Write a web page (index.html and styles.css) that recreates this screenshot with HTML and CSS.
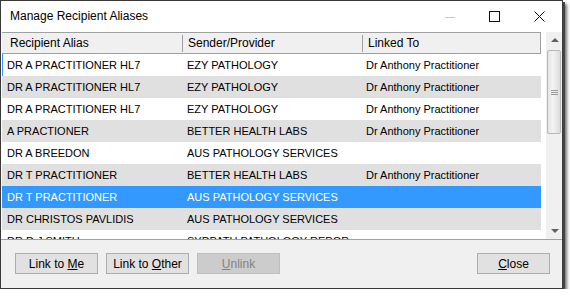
FILE: index.html
```html
<!DOCTYPE html>
<html lang="en">
<head>
	<meta charset="UTF-8">
	<title>Manage Recipient Aliases</title>
	<link rel="stylesheet" href="styles.css">
</head>
<body>
	<div class="win">
		<div class="titlebar">
			<span class="title">Manage Recipient Aliases</span>
			<div class="caption">
				<span class="cap-btn"><svg width="10" height="10" viewBox="0 0 10 10"><path d="M0 5.5h10" stroke="#c8c8c8" stroke-width="1"/></svg></span>
				<span class="cap-btn"><svg width="11" height="11" viewBox="0 0 11 11"><rect x="0.5" y="0.5" width="10" height="10" fill="none" stroke="#111" stroke-width="1"/></svg></span>
				<span class="cap-btn"><svg width="11" height="11" viewBox="0 0 11 11"><path d="M0.5 0.5L10.5 10.5M10.5 0.5L0.5 10.5" stroke="#111" stroke-width="1"/></svg></span>
			</div>
		</div>
		<div class="list">
			<div class="grid">
				<div class="head">
					<div class="hcell">Recipient Alias</div>
					<div class="hcell">Sender/Provider</div>
					<div class="hcell last">Linked To</div>
				</div>
				<div class="rows">
					<div class="row first"><span>DR A PRACTITIONER HL7</span><span>EZY PATHOLOGY</span><span class="linked">Dr Anthony Practitioner</span></div>
					<div class="row alt"><span>DR A PRACTITIONER HL7</span><span>EZY PATHOLOGY</span><span class="linked">Dr Anthony Practitioner</span></div>
					<div class="row"><span>DR A PRACTITIONER HL7</span><span>EZY PATHOLOGY</span><span class="linked">Dr Anthony Practitioner</span></div>
					<div class="row alt"><span>A PRACTIONER</span><span>BETTER HEALTH LABS</span><span class="linked">Dr Anthony Practitioner</span></div>
					<div class="row"><span>DR A BREEDON</span><span>AUS PATHOLOGY SERVICES</span><span class="linked"></span></div>
					<div class="row alt"><span>DR T PRACTITIONER</span><span>BETTER HEALTH LABS</span><span class="linked">Dr Anthony Practitioner</span></div>
					<div class="row sel"><span>DR T PRACTITIONER</span><span>AUS PATHOLOGY SERVICES</span><span class="linked"></span></div>
					<div class="row alt"><span>DR CHRISTOS PAVLIDIS</span><span>AUS PATHOLOGY SERVICES</span><span class="linked"></span></div>
					<div class="row"><span>DR D J SMITH</span><span>SYDPATH PATHOLOGY REPOR</span><span class="linked"></span></div>
				</div>
			</div>
			<div class="scroll">
				<div class="arrow up"></div>
				<div class="track"><div class="thumb"><span class="grip"></span></div></div>
				<div class="arrow down"></div>
			</div>
		</div>
		<div class="footer">
			<button class="btn">Link to <u>M</u>e</button>
			<button class="btn">Link to <u>O</u>ther</button>
			<button class="btn off"><u>U</u>nlink</button>
			<button class="btn close"><u>C</u>lose</button>
		</div>
	</div>
</body>
</html>
```

FILE: styles.css
```css
*{
	box-sizing: border-box;
	margin: 0;
	padding: 0;
}
body{
	background: #fff;
	font-family: "Liberation Sans", Arial, sans-serif;
	color: #000;
}
.win{
	width: 563px;
	height: 289px;
	border: 1px solid #3a3a3a;
	background: #f0f0f0;
	box-shadow: 2px 2px 0 #444, 4px 4px 3px rgba(0,0,0,.55);
	display: flex;
	flex-direction: column;
}
.titlebar{
	height: 31px;
	background: #fff;
	display: flex;
	align-items: center;
	padding-left: 9px;
}
.title{
	font-size: 12px;
	flex: 1;
	padding-bottom: 1px;
}
.caption{
	display: flex;
	height: 100%;
}
.cap-btn{
	width: 45px;
	display: flex;
	align-items: center;
	justify-content: center;
}
.list{
	height: 208px;
	display: flex;
	background: #fff;
	border-bottom: 1px solid #a0a0a0;
	padding-left: 1px;
	overflow: hidden;
}
.grid{
	width: 539px;
	font-size: 11px;
}
.head{
	display: flex;
	height: 22px;
	background: #f0f0f0;
	border: 1px solid #a0a0a0;
	border-left: 0;
}
.hcell{
	width: 180px;
	padding-left: 8px;
	line-height: 20px;
	font-size: 12px;
	position: relative;
}
.hcell:nth-child(2){
	padding-left: 6px;
}
.hcell:before{
	content: "";
	position: absolute;
	left: 0;
	top: 2px;
	bottom: 1px;
	border-left: 1px solid #a0a0a0;
}
.hcell:first-child:before{
	display: none;
}
.hcell.last{
	flex: 1;
	padding-left: 6px;
}
.rows{
	height: 186px;
	overflow: hidden;
}
.row{
	display: flex;
	height: 22px;
	line-height: 22px;
}
.row span{
	width: 180px;
	padding-left: 5px;
	white-space: nowrap;
	overflow: hidden;
}
.row span.linked{
	flex: 1;
	padding-left: 4px;
}
.row.first{
	box-shadow: inset 1px 0 0 #3399ff;
}
.alt{
	background: #e0e0e0;
}
.sel{
	background: #3399ff;
	color: #fff;
}
.scroll{
	width: 17px;
	margin-left: 5px;
	background: #f0f0f0;
	display: flex;
	flex-direction: column;
}
.arrow{
	height: 17px;
	position: relative;
}
.arrow:after{
	content: "";
	position: absolute;
	left: 5px;
	border-left: 4px solid transparent;
	border-right: 4px solid transparent;
}
.arrow.up:after{
	top: 6px;
	border-bottom: 4px solid #606060;
}
.arrow.down:after{
	top: 7px;
	border-top: 4px solid #606060;
}
.track{
	flex: 1;
	padding: 1px 1px 0 1px;
}
.thumb{
	height: 84px;
	background: linear-gradient(to right, #e4e4e4, #f4f4f4 40%, #dcdcdc);
	border: 1px solid #b8b8b8;
	border-radius: 2px;
	display: flex;
	align-items: center;
	justify-content: center;
}
.grip{
	width: 7px;
	height: 5px;
	border-top: 1px solid #9a9a9a;
	border-bottom: 1px solid #9a9a9a;
	position: relative;
}
.grip:after{
	content: "";
	position: absolute;
	left: 0;
	right: 0;
	top: 1px;
	border-top: 1px solid #9a9a9a;
}
.footer{
	flex: 1;
	display: flex;
	padding: 13px 12px 0 14px;
	gap: 8px;
}
.btn{
	width: 83px;
	height: 21px;
	font-family: "Liberation Sans", Arial, sans-serif;
	font-size: 12px;
	background: #e1e1e1;
	border: 1px solid #adadad;
	color: #000;
}
.btn.off{
	background: #cccccc;
	border-color: #bfbfbf;
	color: #838383;
}
.btn.close{
	width: 73px;
	margin-left: auto;
}
```
